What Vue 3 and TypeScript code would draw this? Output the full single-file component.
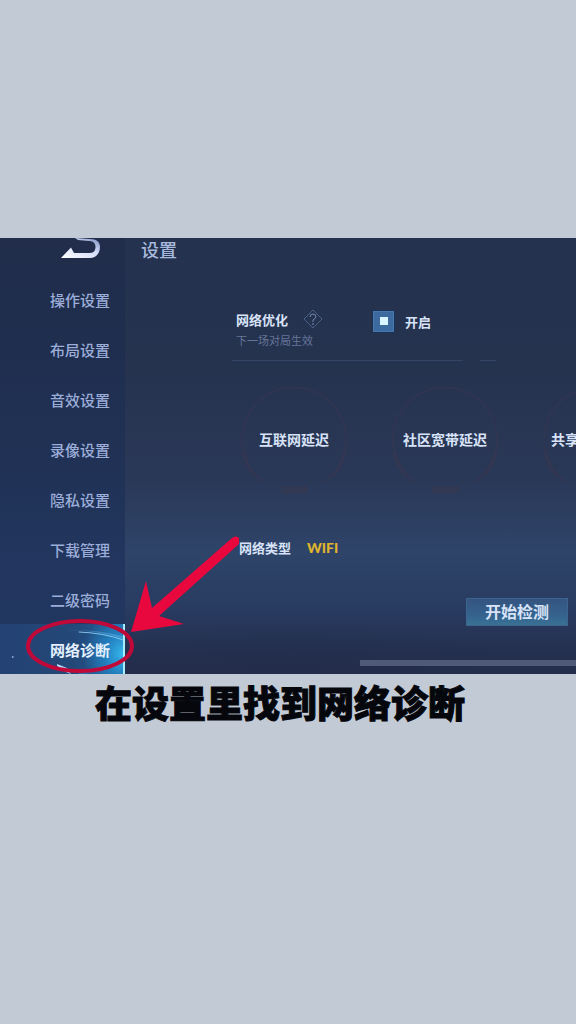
<script setup lang="ts">
import { ref } from 'vue'

const tabs: string[] = [
  '操作设置',
  '布局设置',
  '音效设置',
  '录像设置',
  '隐私设置',
  '下载管理',
  '二级密码',
  '网络诊断',
]
const active = ref('网络诊断')
const optimise = ref(true)
const gauges: string[] = ['互联网延迟', '社区宽带延迟', '共享']
</script>

<template>
  <main class="page">
    <section class="panel">
      <aside class="sidebar">
        <button class="back" type="button" aria-label="返回">
          <svg width="44" height="24" viewBox="0 0 44 24">
            <defs>
              <linearGradient id="metal" x1="0" y1="1" x2="1" y2="0">
                <stop offset="0" stop-color="#ffffff" />
                <stop offset="0.6" stop-color="#d3dcfa" />
                <stop offset="1" stop-color="#7489bb" />
              </linearGradient>
            </defs>
            <path
              d="M1 20 L11 9.500 L14 15 H30 C34 15 35.500 12 35.500 9 C35.500 5 33 3 29 3 L18 2 L15 0 L30 1 C37 1 40 4 40 9 C40 15 36 20 30 20 Z"
              fill="url(#metal)"
            />
          </svg>
        </button>
        <nav class="tabs">
          <button
            v-for="tab in tabs"
            :key="tab"
            type="button"
            class="tab"
            :class="{ active: tab === active }"
            @click="active = tab"
          >
            <svg v-if="tab === active" class="streaks" viewBox="0 0 125 50" preserveAspectRatio="none">
              <path d="M66 6 Q100 6 125 15 L125 12 Q98 5 66 6Z" fill="#65b9ee" opacity="0.4" />
              <path d="M80 8 Q106 9 125 16" fill="none" stroke="#9bdcff" stroke-width="1" opacity="0.8" />
              <path d="M58 40 L68 44 L72 50 L67 48 L58 42Z" fill="#b9dcff" />
              <path d="M80 50 Q106 47 120 34" fill="none" stroke="#278fd0" stroke-width="2" opacity="0.5" />
              <circle cx="13" cy="33" r="1" fill="#87a8d8" />
            </svg>
            <span>{{ tab }}</span>
          </button>
        </nav>
      </aside>

      <div class="content">
        <h1 class="title">设置</h1>
        <div class="body">
          <div class="option">
            <div class="option-text">
              <div class="option-name">
                <span>网络优化</span>
                <button class="help" type="button" aria-label="说明">
                  <svg width="20" height="20" viewBox="0 0 20 20" fill="none" stroke="#486087">
                    <path d="M10 1 L19 10 L10 19 L1 10Z" />
                    <path d="M7 8 Q7 5 10 5 Q13 5 13 8 Q13 9 10 11 V13" stroke="#7088b0" />
                    <path d="M10 14 V16" stroke="#7088b0" />
                  </svg>
                </button>
              </div>
              <p class="hint">下一场对局生效</p>
            </div>
            <label class="toggle">
              <input v-model="optimise" type="checkbox" />
              <span>开启</span>
            </label>
          </div>
          <div class="rules"><i></i><i></i></div>

          <div class="gauges">
            <div v-for="name in gauges" :key="name" class="gauge">
              <svg class="ring" viewBox="0 0 108 108" fill="none" stroke="#39384f">
                <path d="M24 96 A52 52 0 1 1 84 96" stroke-width="2" opacity="0.45" />
                <path d="M3 65 A52 52 0 0 0 15 90 M93 90 A52 52 0 0 0 105 65" stroke-width="4" opacity="0.4" />
                <path d="M41 104 H68" stroke-width="8" opacity="0.55" />
              </svg>
              <span class="gauge-name">{{ name }}</span>
            </div>
          </div>

          <p class="type"><span>网络类型</span><strong>WIFI</strong></p>
          <button class="start" type="button">开始检测</button>
        </div>
        <div class="scrollbar"></div>
      </div>

      <svg class="marks" width="250" height="436" viewBox="0 0 250 436">
        <ellipse cx="80" cy="408" rx="52" ry="25" fill="none" stroke="#c00939" stroke-width="4" />
        <path d="M131 394 L146 343 L152 370 L232 300 Q236 297 239 300 L239 306 L159 378 L184 386 Z" fill="#e8083d" />
      </svg>
    </section>
    <p class="caption">在设置里找到网络诊断</p>
  </main>
</template>

<style>
body {
  margin: 0;
  background: #c2cad5;
}
</style>

<style scoped>
.page {
  box-sizing: border-box;
  min-height: 100vh;
  padding-top: 238px;
  background: #c2cad5;
  font-family: 'Noto Sans', 'Noto Sans CJK SC', sans-serif;
}

button {
  padding: 0;
  border: 0;
  background: none;
  font: inherit;
  color: inherit;
  cursor: pointer;
}

h1,
p {
  margin: 0;
}

.panel {
  position: relative;
  display: grid;
  grid-template-columns: 125px minmax(0, 1fr);
  overflow: hidden;
  background:
    radial-gradient(ellipse 260px 60px at 50% 102%, #232d4b, transparent),
    linear-gradient(180deg, #25324f 0%, #26334f 30%, #2a3857 55%, #2e4469 72%, #293c62 84%, #242f4e 96%, #232d4b 100%);
}

.sidebar {
  background: linear-gradient(180deg, #212d4a 0%, #1f2e4f 25%, #203256 55%, #22365f 75%, #213760 100%);
}

.back {
  display: block;
  height: 36px;
  padding-left: 60px;
}

.back svg {
  display: block;
  height: 24px;
  margin-bottom: 12px;
}

.tab {
  position: relative;
  display: block;
  width: 100%;
  height: 50px;
  padding: 2px 15px 0 50px;
  text-align: left;
  white-space: nowrap;
  font-size: 15px;
  font-weight: 500;
  line-height: 20px;
  color: #9badd8;
}

.tab.active {
  font-weight: 700;
  color: #e2f0ff;
  border-right: 2px solid #a5edff;
  background:
    radial-gradient(ellipse 40px 44px at 100% 60%, #35b8ee, #2380bf 45%, transparent),
    linear-gradient(90deg, #244273, #234878 60%, #225d98);
}

.tab span {
  position: relative;
}

.streaks {
  position: absolute;
  inset: 0;
  width: 100%;
  height: 100%;
}

.content {
  display: flex;
  flex-direction: column;
  min-width: 0;
}

.title {
  padding-left: 16px;
  font-size: 18px;
  font-weight: 500;
  line-height: 24px;
  color: #a8b9de;
}

.body {
  display: flex;
  flex-direction: column;
  padding: 47px 8px 0 107px;
  font-weight: 700;
  color: #d8e3f8;
}

.option {
  display: flex;
  padding: 0 4px;
}

.option-text {
  width: 137px;
}

.option-name {
  display: flex;
  align-items: center;
  gap: 15px;
  height: 20px;
  font-size: 13px;
}

.help svg {
  display: block;
}

.hint {
  padding-top: 3px;
  font-size: 11px;
  font-weight: 400;
  line-height: 18px;
  color: #65759a;
}

.toggle {
  display: flex;
  align-items: center;
  gap: 11px;
  height: 24px;
  font-size: 13px;
}

.toggle input {
  appearance: none;
  width: 21px;
  height: 21px;
  margin: 0;
  border: 1px solid #4679ad;
  background: #3c6a9e;
  outline: 1px solid #1c3156;
}

.toggle input:checked {
  background: linear-gradient(#d9f5ff, #d9f5ff) center / 8px 8px no-repeat, #3c6a9e;
}

.rules {
  display: flex;
  gap: 17px;
  padding-top: 10px;
}

.rules i {
  width: 231px;
  height: 1px;
  background: #344565;
}

.rules i + i {
  width: 16px;
}

.gauges {
  display: flex;
  gap: 43px;
  padding: 25px 0 0 8px;
  margin-right: -8px;
  overflow: hidden;
}

.gauge {
  display: grid;
  flex: none;
  place-items: center;
  width: 108px;
  height: 108px;
}

.gauge > * {
  grid-area: 1 / 1;
}

.ring {
  width: 108px;
  height: 108px;
}

.gauge-name {
  font-size: 14px;
  line-height: 20px;
}

.gauge:last-child .gauge-name {
  justify-self: start;
  padding-left: 9px;
}

.type {
  display: flex;
  gap: 16px;
  padding: 44px 0 0 7px;
  font-size: 13px;
  line-height: 20px;
}

.type strong {
  font-family: Lato, sans-serif;
  font-size: 14px;
  font-weight: 900;
  color: #e0b52e;
}

.start {
  align-self: flex-end;
  width: 102px;
  height: 28px;
  margin-top: 40px;
  border: 1px solid #3b648f;
  background: linear-gradient(180deg, #34547f, #356590 70%, #3a7193);
  font-size: 16px;
  line-height: 24px;
}

.scrollbar {
  align-self: flex-end;
  width: 48%;
  height: 6px;
  margin-top: auto;
  margin-bottom: 8px;
  background: #4e5a78;
}

.marks {
  position: absolute;
  left: 0;
  top: 0;
  pointer-events: none;
}

.caption {
  padding: 4px 16px 0 0;
  text-align: center;
  font-family: 'Noto Sans CJK SC', sans-serif;
  font-size: 37px;
  font-weight: 900;
  line-height: 48px;
  color: #05070c;
  -webkit-text-stroke: 1px #05070c;
}
</style>
